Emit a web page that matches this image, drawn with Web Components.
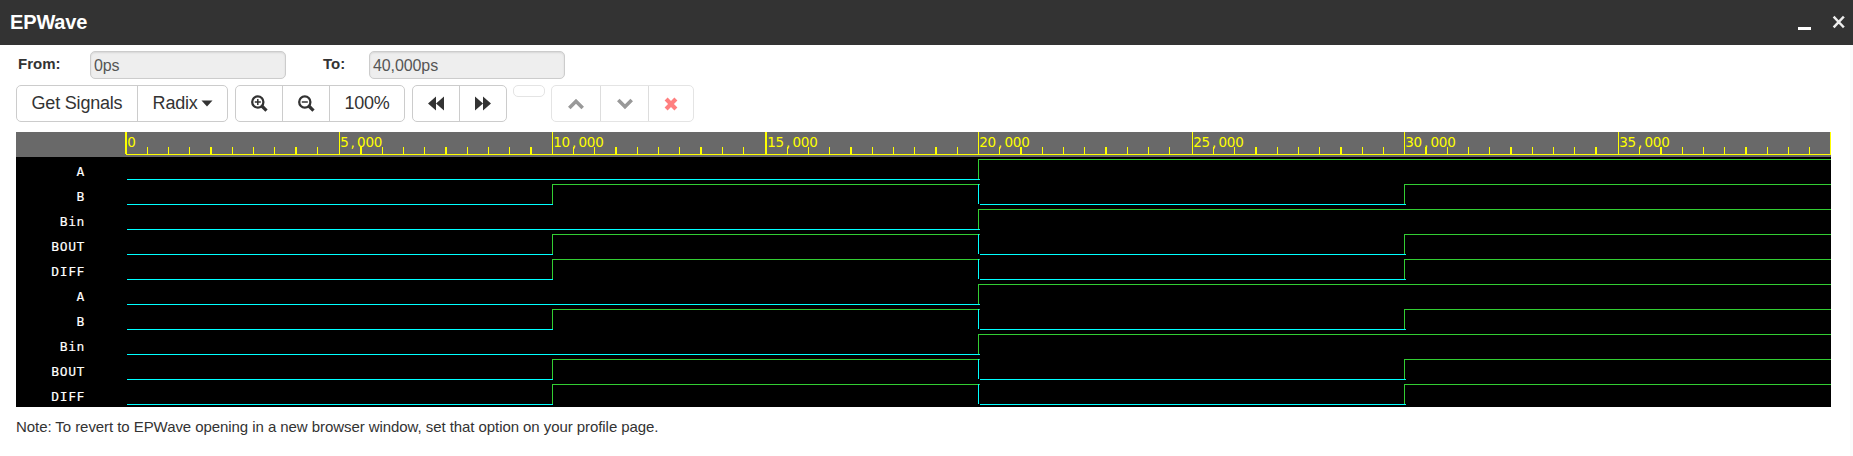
<!DOCTYPE html>
<html lang="en">
<head>
<meta charset="utf-8">
<title>EPWave</title>
<style>
body{margin:0;background:#fff;color:#333;font-family:"Liberation Sans",Arial,sans-serif;height:456px;overflow:hidden}
</style>
</head>
<body>
<ep-app></ep-app>
<script>
const define=(name,html)=>customElements.define(name,class extends HTMLElement{
  constructor(){super();this.attachShadow({mode:'open'});}
  connectedCallback(){
    const t=document.createElement('template');
    t.innerHTML=typeof html==='function'?html(this):html;
    this.shadowRoot.replaceChildren(t.content.cloneNode(true));
  }
});

define('ep-titlebar',`<style>
:host{display:flex;justify-content:space-between;height:45px;background:#333;color:#fff;box-sizing:border-box;padding:0 7px 0 10px}
b{font-size:20px;line-height:44px;letter-spacing:-.15px}
svg{display:block;width:60px;height:45px}
</style><b><slot></slot></b>
<svg viewBox="0 0 60 45"><path d="M12 27h13v3h-13z" fill="#fff"/><path d="M48.5 17.5l8.5 9M57 17.5l-8.5 9" stroke="#eee" stroke-width="2.5" stroke-linecap="square" fill="none"/></svg>`);

define('ep-field',el=>`<style>
:host{display:flex;align-items:flex-start}
b{width:${el.getAttribute('label-width')}px;font-size:15px;line-height:25px}
div{box-sizing:border-box;width:196px;height:28px;border:1px solid #ccc;border-radius:5px;background:#eee;color:#555;font-size:16px;line-height:27px;letter-spacing:-.1px;padding-left:3px;box-shadow:inset 0 1px 2px rgba(0,0,0,.1)}
</style><b>${el.getAttribute('label')}</b><div><slot></slot></div>`);

define('ep-group',`<style>
:host{display:flex;box-sizing:border-box;height:37px;border:1px solid #ccc;border-radius:5px;overflow:hidden}
:host([disabled]){border-color:#e4e4e4}
:host([empty]){width:32px;height:12px;margin:0 -1px}
</style><slot></slot>`);

define('ep-button',el=>`<style>
:host{display:flex;box-sizing:border-box;width:${el.getAttribute('w')}px;height:35px;align-items:center;justify-content:center;border-left:1px solid #ccc;font-size:18px;line-height:35px;letter-spacing:-.2px;white-space:pre}
:host(:first-child){border-left:0}
:host([disabled]){border-color:#ddd}
</style><slot></slot>`);

const glyphs={
  plus:'<circle cx="6.8" cy="7" r="5.6" fill="none" stroke="#333" stroke-width="2.3"/><path d="M10.8 11l4.7 4.7" stroke="#333" stroke-width="3.2"/><path d="M6.8 4v6M3.8 7h6" stroke="#333" stroke-width="1.5"/>',
  minus:'<circle cx="6.8" cy="7" r="5.6" fill="none" stroke="#333" stroke-width="2.3"/><path d="M10.8 11l4.7 4.7" stroke="#333" stroke-width="3.2"/><path d="M3.8 7h6" stroke="#333" stroke-width="1.5"/>',
  back:'<path d="M0 8.5L8 1.5V15.5zM8 8.5L16 1.5V15.5z" fill="#333"/>',
  forward:'<path d="M16 8.5L8 1.5V15.5zM8 8.5L0 1.5V15.5z" fill="#333"/>',
  up:'<path d="M1.3 13L8 6.3L14.7 13" fill="none" stroke="#999" stroke-width="3.6"/>',
  down:'<path d="M1.3 5L8 11.7L14.7 5" fill="none" stroke="#999" stroke-width="3.6"/>',
  remove:'<path d="M3.1 4.1L12.9 13.9M12.9 4.1L3.1 13.9" fill="none" stroke="#ff7f7f" stroke-width="4.2"/>',
  caret:'<path d="M2.5 5.5h11l-5.5 6z" fill="#333"/>'
};
define('ep-icon',el=>`<style>:host{display:block;white-space:normal;line-height:0}svg{display:block;width:16px;height:17px;overflow:visible}</style><svg viewBox="0 0 16 17">${glyphs[el.getAttribute('name')]}</svg>`);

define('ep-toolbar',`<style>
:host{display:flex;align-items:flex-start;gap:7px;padding:6px 0 0 16px;height:41px}
</style>
<ep-group><ep-button w="120">Get Signals</ep-button><ep-button w="90">Radix <ep-icon name="caret" style="margin:0 -3px 0 -3px"></ep-icon></ep-button></ep-group>
<ep-group><ep-button w="46"><ep-icon name="plus"></ep-icon></ep-button><ep-button w="47"><ep-icon name="minus"></ep-icon></ep-button><ep-button w="75">100%</ep-button></ep-group>
<ep-group><ep-button w="46"><ep-icon name="back"></ep-icon></ep-button><ep-button w="47"><ep-icon name="forward"></ep-icon></ep-button></ep-group>
<ep-group disabled empty></ep-group>
<ep-group disabled><ep-button w="48" disabled><ep-icon name="up"></ep-icon></ep-button><ep-button w="48" disabled><ep-icon name="down"></ep-icon></ep-button><ep-button w="45" disabled><ep-icon name="remove"></ep-icon></ep-button></ep-group>`);

// Time ruler: 80 divisions, one pixel column (or two) per tick.
const ruler=()=>{
  let s='<path d="M110 22h1705v1H110z" fill="#ff0"/>';
  for(let k=0;k<=80;k++){
    const p=110+1.25*Math.round(17.05*k), two=p%1===0, x=two?p-1:Math.floor(p), y=k%10?15:0;
    s+=`<rect x="${x}" y="${y}" width="${two?2:1}" height="${22-y}" fill="#ff0"/>`;
    if(k%10===0&&k<80){
      const label=(k*500).toLocaleString('en-US');
      const xs=[...label].map((c,i)=>(Math.floor(p)+1.2+i*8.4+(c===','?2:0)).toFixed(2)).join(' ');
      s+=`<text x="${xs}" y="15">${label}</text>`;
    }
  }
  return s;
};
define('wave-ruler',()=>`<style>:host{display:block;height:25px;background:#696969}svg{display:block}
text{font:13.5px "DejaVu Sans",sans-serif;fill:#ff0}</style><svg width="1815" height="25" shape-rendering="crispEdges">${ruler()}</svg>`);

const G='#32cd32',C='#0ff';
const bar=(x,y,w,h,c)=>`<rect x="${x}" y="${y}" width="${w}" height="${h}" fill="${c}"/>`;
const shapes={
  step:bar(0,22,853,1,C)+bar(851,2,1,20,G)+bar(851,2,853,1,G),
  pulse:bar(0,22,426,1,C)+bar(425,2,1,20,G)+bar(425,2,428,1,G)+bar(851,2,1,20,C)+bar(853,22,426,1,C)+bar(1277,2,1,20,G)+bar(1277,2,427,1,G)
};
define('wave-row',el=>`<style>:host{display:flex;height:25px}
span{width:69px;text-align:right;font:13px/29px "DejaVu Sans Mono",monospace;letter-spacing:.6px;color:#fff;-webkit-text-stroke:.15px #fff;margin-right:42px}
svg{display:block}</style><span><slot></slot></span><svg width="1704" height="25" shape-rendering="crispEdges">${shapes[el.getAttribute('kind')]}</svg>`);

define('wave-view',`<style>:host{display:block;width:1815px;height:275px;margin:6px 0 0 16px;background:#000}</style>
<wave-ruler></wave-ruler>`+[['A','step'],['B','pulse'],['Bin','step'],['BOUT','pulse'],['DIFF','pulse'],['A','step'],['B','pulse'],['Bin','step'],['BOUT','pulse'],['DIFF','pulse']].map(([n,k])=>`<wave-row kind="${k}">${n}</wave-row>`).join(''));

define('ep-app',`<style>:host{display:block}
main{height:411px;border-right:3px solid #fbfbfb}
.range{display:flex;gap:37px;padding:6px 0 0 18px;height:28px}
p{margin:9px 0 0 16px;font-size:15px;line-height:22px;letter-spacing:-.065px}</style>
<ep-titlebar>EPWave</ep-titlebar>
<main>
<div class="range"><ep-field label="From:" label-width="72">0ps</ep-field><ep-field label="To:" label-width="46">40,000ps</ep-field></div>
<ep-toolbar></ep-toolbar>
<wave-view></wave-view>
<p>Note: To revert to EPWave opening in a new browser window, set that option on your profile page.</p>
</main>`);
</script>
</body>
</html>
